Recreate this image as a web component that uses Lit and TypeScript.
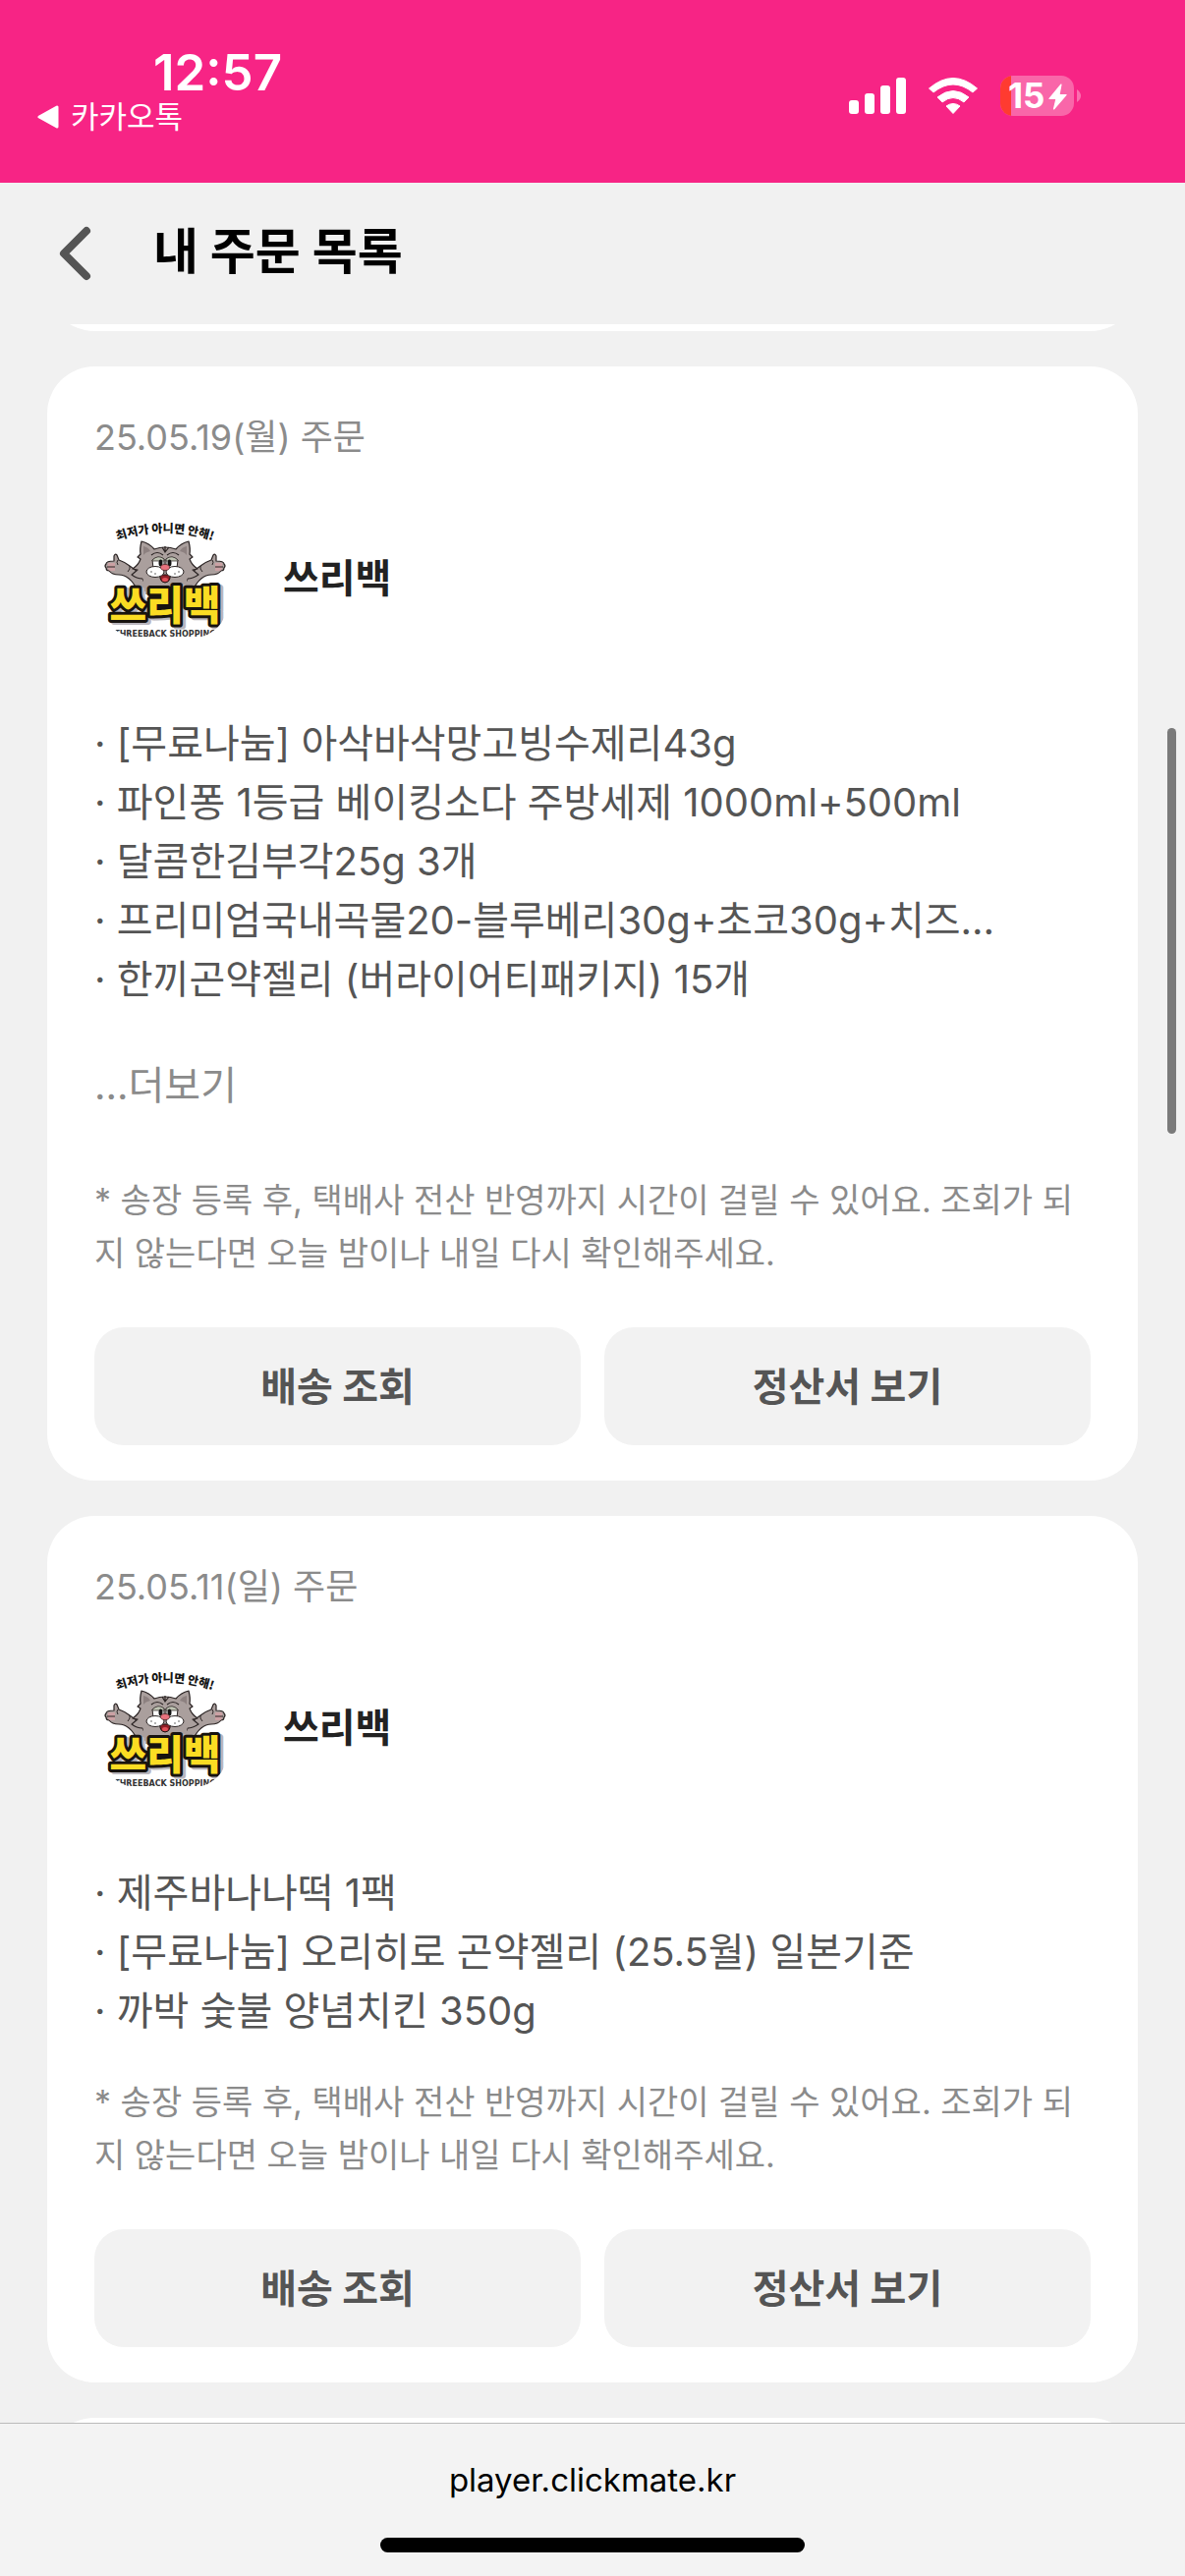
import { LitElement, html, css, svg, nothing } from "lit";
import { customElement, property } from "lit/decorators.js";

interface Order {
  date: string;
  shop: string;
  items: string[];
  more: boolean;
}

const ORDERS: Order[] = [
  {
    date: "25.05.19(월) 주문",
    shop: "쓰리백",
    items: [
      "[무료나눔] 아삭바삭망고빙수제리43g",
      "파인퐁 1등급 베이킹소다 주방세제 1000ml+500ml",
      "달콤한김부각25g 3개",
      "프리미엄국내곡물20-블루베리30g+초코30g+치즈…",
      "한끼곤약젤리 (버라이어티패키지) 15개",
    ],
    more: true,
  },
  {
    date: "25.05.11(일) 주문",
    shop: "쓰리백",
    items: [
      "제주바나나떡 1팩",
      "[무료나눔] 오리히로 곤약젤리 (25.5월) 일본기준",
      "까박 숯불 양념치킨 350g",
    ],
    more: false,
  },
];

const NOTICE =
  "* 송장 등록 후, 택배사 전산 반영까지 시간이 걸릴 수 있어요. 조회가 되지 않는다면 오늘 밤이나 내일 다시 확인해주세요.";

/* One raised arm with its open hand; the right arm is its mirror image. */
const arm = svg`
  <path d="M43 72 C40 62 34 53 24 47 C20 44 16 42 13 41 L11 36 Q9 34 8 37 L8 42 Q0 42 0 45 Q-2 47 0 49 Q0 52 3 52 Q6 56 13 56 Q24 56 32 72 Z"
    fill="#aa9f9d" stroke="#2b2424" stroke-width="1.2" stroke-linejoin="round"/>
  <path d="M2 44 H9 V52 H4 Q1 51 2 44 Z" fill="#d9a3a6" opacity=".7"/>
  <path d="M1 48 H9 M12 41 Q10 43 12 46 M24 47 Q25 50 22 53" fill="none" stroke="#2b2424" stroke-width="1"/>
`;

@customElement("shop-logo")
export class ShopLogo extends LitElement {
  static styles = css`
    :host { display: block; width: 144px; height: 144px; flex: none; }
    .art { display: block; width: 100%; height: 100%; }
    .slogan { font: 900 12px "Noto Sans CJK KR", sans-serif; fill: #151515; }
    .brand {
      font: 900 41px "Noto Sans CJK KR", sans-serif;
      paint-order: stroke;
      stroke-linejoin: round;
    }
    .brand-shade { fill: #b9b6bd; stroke: #b9b6bd; stroke-width: 6px; }
    .brand-face { fill: #fbdc23; stroke: #17130f; stroke-width: 6px; }
    .latin { font: 700 8px "DejaVu Sans", sans-serif; fill: #333; }
  `;

  render() {
    return html`
      <svg class="art" viewBox="-12 -12 144 144" role="img" aria-label="쓰리백">
        <defs>
          <clipPath id="frame"><rect x="-3" y="-2" width="126" height="122" rx="34"/></clipPath>
          <path id="arc" d="M9 22 Q60 4 111 22"/>
        </defs>
        <g clip-path="url(#frame)">
          ${arm}
          <g transform="translate(120 0) scale(-1 1)">${arm}</g>
          <path d="M36 22 Q44 24 49 30 Q60 26 71 30 Q76 24 84 22 Q86 30 85 35 L88 38 L85 40 Q87 46 93 50 L88 51 L94 56 Q88 60 83 60 Q78 72 60 74 Q42 72 37 60 Q31 60 26 56 L32 51 L27 50 Q33 46 35 40 L32 38 L35 35 Q34 30 36 22 Z"
            fill="#aa9f9d" stroke="#2b2424" stroke-width="1.2" stroke-linejoin="round"/>
          <path d="M37 57 Q42 68 60 72 Q78 68 83 57 L80 76 H40 Z" fill="#aa9f9d"/>
          <path d="M38 27 Q43 28 45 32 Q40 33 38 36 Z M82 27 Q77 28 75 32 Q80 33 82 36 Z" fill="#8d8180"/>
          <path d="M57 28 L60 33 L64 28 M60 27 V33 M46 36 Q52 31 58 36 M62 36 Q68 31 74 36" fill="none" stroke="#2b2424" stroke-width="1.2"/>
          <path d="M47 41 Q53 36 59 40 V49 H48 Z M61 40 Q67 36 73 41 L72 49 H61 Z" fill="#fff" stroke="#2b2424" stroke-width="1"/>
          <path d="M47 41 Q53 35 59 40 L59 42 H47 Z M61 40 Q67 35 73 41 V42 H61 Z" fill="#bfc4b3" stroke="#2b2424" stroke-width=".7"/>
          <ellipse cx="55.500" cy="44" rx="2" ry="3.500" fill="#111"/>
          <ellipse cx="64.500" cy="44" rx="2" ry="3.500" fill="#111"/>
          <path d="M55 56 H65 Q66 63 60 64 Q54 63 55 56 Z" fill="#8f1f27" stroke="#1d1111" stroke-width="1"/>
          <ellipse cx="60" cy="61" rx="3" ry="2" fill="#e2515a"/>
          <ellipse cx="50" cy="53" rx="9" ry="5.500" fill="#fff" stroke="#2b2424" stroke-width="1"/>
          <ellipse cx="70" cy="53" rx="9" ry="5.500" fill="#fff" stroke="#2b2424" stroke-width="1"/>
          <ellipse cx="60" cy="48.500" rx="4.500" ry="3" fill="#e8727e" stroke="#54262a" stroke-width=".8"/>
          <g fill="#555">
            <circle cx="46" cy="53" r=".8"/><circle cx="50" cy="55" r=".8"/>
            <circle cx="70" cy="55" r=".8"/><circle cx="74" cy="53" r=".8"/>
          </g>
          <text class="slogan" text-anchor="middle"><textPath href="#arc" startOffset="50%">최저가 아니면 안해!</textPath></text>
          <text class="brand brand-shade" x="63" y="104" text-anchor="middle">쓰리백</text>
          <text class="brand brand-face" x="60" y="102" text-anchor="middle">쓰리백</text>
          <text class="latin" x="60" y="119" text-anchor="middle">THREEBACK SHOPPING</text>
        </g>
      </svg>
    `;
  }
}

@customElement("order-card")
export class OrderCard extends LitElement {
  @property({ attribute: false }) order!: Order;

  static styles = css`
    :host { display: block; flex: none; }
    .card {
      display: flex;
      flex-direction: column;
      padding: 48px 48px 36px;
      border-radius: 48px;
      background: #fff;
    }
    .date { color: #8b8b8b; font-size: 36px; line-height: 48px; }
    .shop { display: flex; align-items: center; gap: 48px; margin-top: 48px; }
    .name { margin: 0; color: #222; font-size: 40px; line-height: 60px; font-weight: 700; }
    .items {
      margin: 66px 0 0;
      padding: 0;
      list-style: none;
      color: #555;
      font-size: 40px;
      line-height: 60px;
    }
    .item { white-space: nowrap; overflow: hidden; text-overflow: ellipsis; }
    .more {
      align-self: flex-start;
      margin: 48px 0 24px;
      padding: 0;
      border: 0;
      background: none;
      color: #8b8b8b;
      font: inherit;
      font-size: 40px;
      line-height: 60px;
    }
    .notice { margin: 36px 0 48px; color: #8b8b8b; font-size: 34px; line-height: 54px; }
    .actions { display: flex; gap: 24px; }
    .action {
      flex: 1;
      height: 120px;
      padding: 0 0 4px;
      border: 0;
      border-radius: 30px;
      background: #f2f2f2;
      color: #555;
      font: inherit;
      font-size: 40px;
      font-weight: 700;
    }
  `;

  render() {
    const { date, shop, items, more } = this.order;
    return html`
      <article class="card">
        <div class="date">${date}</div>
        <div class="shop">
          <shop-logo></shop-logo>
          <h2 class="name">${shop}</h2>
        </div>
        <ul class="items">
          ${items.map((item) => html`<li class="item">· ${item}</li>`)}
        </ul>
        ${more ? html`<button class="more" type="button">...더보기</button>` : nothing}
        <p class="notice">${NOTICE}</p>
        <div class="actions">
          <button class="action" type="button">배송 조회</button>
          <button class="action" type="button">정산서 보기</button>
        </div>
      </article>
    `;
  }
}

@customElement("status-bar")
export class StatusBar extends LitElement {
  static styles = css`
    :host { display: block; flex: none; }
    .bar {
      display: flex;
      justify-content: space-between;
      height: 186px;
      padding: 0 104px 0 38px;
      box-sizing: border-box;
      background: #f72485;
      color: #fff;
    }
    .left { display: flex; flex-direction: column; padding-top: 46px; }
    .time { padding-left: 118px; font-size: 51px; line-height: 56px; font-weight: 600; }
    .return {
      display: flex;
      align-items: center;
      gap: 12px;
      color: inherit;
      text-decoration: none;
      font-size: 31px;
      line-height: 34px;
    }
    .tri { width: 22px; height: 24px; }
    .right { display: flex; align-items: flex-start; gap: 22px; padding-top: 76px; }
    .signal { width: 58px; height: 43px; }
    .wifi { width: 52px; height: 43px; }
    .battery { width: 84px; height: 43px; }
    .level { font: 700 35px Inter, sans-serif; fill: #fff; }
  `;

  render() {
    return html`
      <div class="bar">
        <div class="left">
          <span class="time">12:57</span>
          <a class="return" href="#kakaotalk">
            <svg class="tri" viewBox="0 0 22 24" aria-hidden="true">
              <path d="M2 12 L20 2 V22 Z" fill="#fff" stroke="#fff" stroke-width="3" stroke-linejoin="round"/>
            </svg>
            카카오톡
          </a>
        </div>
        <div class="right">
          <svg class="signal" viewBox="0 0 58 43" fill="#fff" role="img" aria-label="신호 세기">
            <rect x="0" y="26" width="10" height="14" rx="3"/>
            <rect x="16" y="19" width="10" height="21" rx="3"/>
            <rect x="32" y="11" width="10" height="29" rx="3"/>
            <rect x="48" y="3" width="10" height="37" rx="3"/>
          </svg>
          <svg class="wifi" viewBox="0 0 52 43" role="img" aria-label="Wi-Fi">
            <g fill="#fff" stroke="#fff" stroke-width="1" stroke-linejoin="round">
              <path d="M1.500 14 Q26 -7 50.500 14 L46 18 Q26 2 6 18 Z"/>
              <path d="M10 23 Q26 10 42 23 L37 28 Q26 19 15 28 Z"/>
              <path d="M19 32 Q26 27 33 32 L26 39.500 Z"/>
            </g>
          </svg>
          <svg class="battery" viewBox="0 0 84 43" role="img" aria-label="배터리 15%">
            <defs><clipPath id="cell"><rect width="75" height="41" y="1" rx="13"/></clipPath></defs>
            <g clip-path="url(#cell)">
              <rect width="75" height="43" fill="#fff" opacity=".3"/>
              <rect width="11" height="43" fill="#ff3b30"/>
            </g>
            <path d="M78 15 Q82 18 82 21.500 Q82 25 78 28 Z" fill="#fff" opacity=".35"/>
            <text class="level" x="8" y="34">15</text>
            <path d="M62 10 L50 24.500 H57 L54.500 35 L67 20.500 H60 Z" fill="#fff" stroke="#fff" stroke-width="1.2" stroke-linejoin="round"/>
          </svg>
        </div>
      </div>
    `;
  }
}

@customElement("app-root")
export class AppRoot extends LitElement {
  static styles = css`
    :host {
      display: flex;
      flex-direction: column;
      height: 100vh;
      overflow: hidden;
      background: #f1f1f1;
      font-family: Inter, "Noto Sans CJK KR", sans-serif;
    }
    .header {
      display: flex;
      align-items: center;
      flex: none;
      gap: 60px;
      height: 144px;
      padding: 0 56px;
      box-sizing: border-box;
    }
    .back { display: flex; padding: 0; border: 0; background: none; }
    .chevron { width: 40px; height: 64px; }
    .title { margin: 0; padding-bottom: 4px; color: #000; font-size: 50px; line-height: 72px; font-weight: 700; }
    .scroller { position: relative; flex: 1; min-height: 0; overflow: hidden; }
    .list { display: flex; flex-direction: column; gap: 36px; padding: 0 48px; }
    .edge { flex: none; height: 96px; border-radius: 48px; background: #fff; }
    .before { margin-top: -89px; }
    .thumb {
      position: absolute;
      top: 411px;
      right: 9px;
      width: 9px;
      height: 413px;
      border-radius: 5px;
      background: #7a7a7a;
    }
    .toolbar {
      display: flex;
      flex-direction: column;
      align-items: center;
      justify-content: space-between;
      flex: none;
      height: 156px;
      padding: 36px 0 24px;
      box-sizing: border-box;
      border-top: 1px solid #bababa;
      background: #f3f3f3;
    }
    .url { color: #000; font-size: 33px; line-height: 42px; }
    .home { width: 432px; height: 15px; border-radius: 8px; background: #000; }
  `;

  render() {
    return html`
      <status-bar></status-bar>
      <header class="header">
        <button class="back" type="button" aria-label="뒤로">
          <svg class="chevron" viewBox="0 0 40 64" aria-hidden="true">
            <path d="M32 9 L9 32 L32 55" fill="none" stroke="#555" stroke-width="8" stroke-linecap="round" stroke-linejoin="round"/>
          </svg>
        </button>
        <h1 class="title">내 주문 목록</h1>
      </header>
      <main class="scroller">
        <div class="list">
          <div class="edge before"></div>
          ${ORDERS.map((order) => html`<order-card .order=${order}></order-card>`)}
          <div class="edge"></div>
        </div>
        <div class="thumb"></div>
      </main>
      <footer class="toolbar">
        <span class="url">player.clickmate.kr</span>
        <div class="home"></div>
      </footer>
    `;
  }
}
